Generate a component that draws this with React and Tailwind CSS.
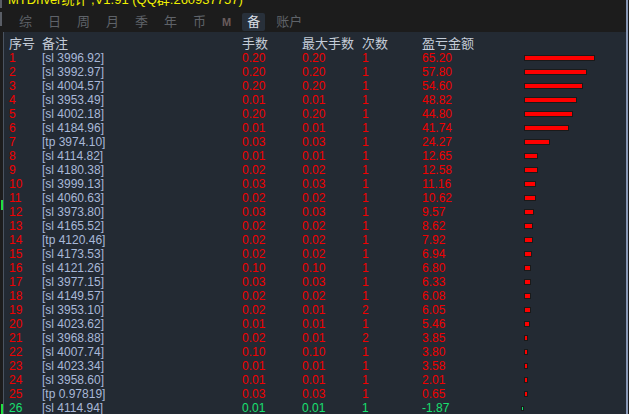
import React from 'react';

const rows = [
  ['1', '[sl 3996.92]', '0.20', '0.20', '1', '65.20'],
  ['2', '[sl 3992.97]', '0.20', '0.20', '1', '57.80'],
  ['3', '[sl 4004.57]', '0.20', '0.20', '1', '54.60'],
  ['4', '[sl 3953.49]', '0.01', '0.01', '1', '48.82'],
  ['5', '[sl 4002.18]', '0.20', '0.20', '1', '44.80'],
  ['6', '[sl 4184.96]', '0.01', '0.01', '1', '41.74'],
  ['7', '[tp 3974.10]', '0.03', '0.03', '1', '24.27'],
  ['8', '[sl 4114.82]', '0.01', '0.01', '1', '12.65'],
  ['9', '[sl 4180.38]', '0.02', '0.02', '1', '12.58'],
  ['10', '[sl 3999.13]', '0.03', '0.03', '1', '11.16'],
  ['11', '[sl 4060.63]', '0.02', '0.02', '1', '10.62'],
  ['12', '[sl 3973.80]', '0.03', '0.03', '1', '9.57'],
  ['13', '[sl 4165.52]', '0.02', '0.02', '1', '8.62'],
  ['14', '[tp 4120.46]', '0.02', '0.02', '1', '7.92'],
  ['15', '[sl 4173.53]', '0.02', '0.02', '1', '6.94'],
  ['16', '[sl 4121.26]', '0.10', '0.10', '1', '6.80'],
  ['17', '[sl 3977.15]', '0.03', '0.03', '1', '6.33'],
  ['18', '[sl 4149.57]', '0.02', '0.02', '1', '6.08'],
  ['19', '[sl 3953.10]', '0.02', '0.01', '2', '6.05'],
  ['20', '[sl 4023.62]', '0.01', '0.01', '1', '5.46'],
  ['21', '[sl 3968.88]', '0.02', '0.01', '2', '3.85'],
  ['22', '[sl 4007.74]', '0.10', '0.10', '1', '3.80'],
  ['23', '[sl 4023.34]', '0.01', '0.01', '1', '3.58'],
  ['24', '[sl 3958.60]', '0.01', '0.01', '1', '2.01'],
  ['25', '[tp 0.97819]', '0.03', '0.03', '1', '0.65'],
  ['26', '[sl 4114.94]', '0.01', '0.01', '1', '-1.87'],
];

const tabs = ['综', '日', '周', '月', '季', '年', '币', 'M', '备', '账户'];

const font = { fontFamily: '"Liberation Sans", "Noto Sans CJK SC", sans-serif' };

const Bar = ({ value }) => {
  const v = parseFloat(value);
  const w = Math.max(4, Math.round((Math.abs(v) / 65.2) * 71));
  if (v < 0) {
    return <div className="h-[5px] w-[3px] -ml-[3px] bg-[#10e070] border border-[#1a1a1a]" />;
  }
  return <div className="h-[6px] bg-[#ff0000] border border-[#1a1a1a]" style={{ width: w }} />;
};

export default function App() {
  return (
    <div className="w-[629px] h-[414px] overflow-hidden bg-[#1c1c1c] flex" style={font}>
      <div className="flex-1 flex flex-col relative">
        {/* marks on the left edge */}
        <div className="absolute left-0 top-0 w-[2px] h-[8px] bg-[#5a5e66]" />
        <div className="absolute left-0 top-[12px] w-[2px] h-[14px] bg-[#5a5e66]" />
        <div className="absolute left-[1px] top-[200px] w-[2px] h-[10px] bg-[#20e040]" />
        <div className="absolute left-[1px] top-[404px] w-[2px] h-[10px] bg-[#20e040]" />

        <div className="h-[32px] shrink-0 relative">
          <div className="absolute left-[8px] -top-[7px] text-[13px] leading-[14px] text-[#f0f000] whitespace-nowrap">
            MTDriver统计 ,V1.91 (QQ群:260937757)
          </div>
          <div className="absolute left-[14px] top-[13px] flex text-[13px] leading-[18px]">
            {tabs.map((t) => (
              <div
                key={t}
                className={`px-[5px] mr-[6px] rounded-[2px] ${
                  t === '备' ? 'bg-[#28303a] text-[#d8dde4]' : t === 'M' ? 'text-[#6a5c5c] font-bold text-[11px]' : 'text-[#5f6369]'
                }`}
              >
                {t}
              </div>
            ))}
          </div>
        </div>

        <div className="flex-1 bg-[#232a33] border-l border-[#4a5360] ml-[3px] text-[12px]">
          <div className="flex h-[19px] items-center pt-[5px] text-[13px] text-[#c4ccd8]">
            <div className="w-[38px] pl-[5px]">序号</div>
            <div className="w-[200px]">备注</div>
            <div className="w-[60px]">手数</div>
            <div className="w-[60px]">最大手数</div>
            <div className="w-[60px]">次数</div>
            <div className="w-[100px]">盈亏金额</div>
          </div>
          {rows.map((r) => {
            const neg = parseFloat(r[5]) < 0;
            const c = neg ? 'text-[#18e070]' : 'text-[#f00000]';
            return (
              <div key={r[0]} className="flex h-[14px] items-center leading-[14px]">
                <div className={`w-[38px] pl-[5px] ${c}`}>{r[0]}</div>
                <div className="w-[200px] text-[#a8b8d8]">{r[1]}</div>
                <div className={`w-[60px] ${c}`}>{r[2]}</div>
                <div className={`w-[60px] ${c}`}>{r[3]}</div>
                <div className={`w-[60px] ${c}`}>{r[4]}</div>
                <div className={`w-[102px] ${c}`}>{r[5]}</div>
                <Bar value={r[5]} />
              </div>
            );
          })}
        </div>
      </div>
      <div className="w-[2px] bg-[#8a9ab8] shrink-0" />
      <div className="w-[1px] bg-[#1c1c1c] shrink-0" />
    </div>
  );
}
